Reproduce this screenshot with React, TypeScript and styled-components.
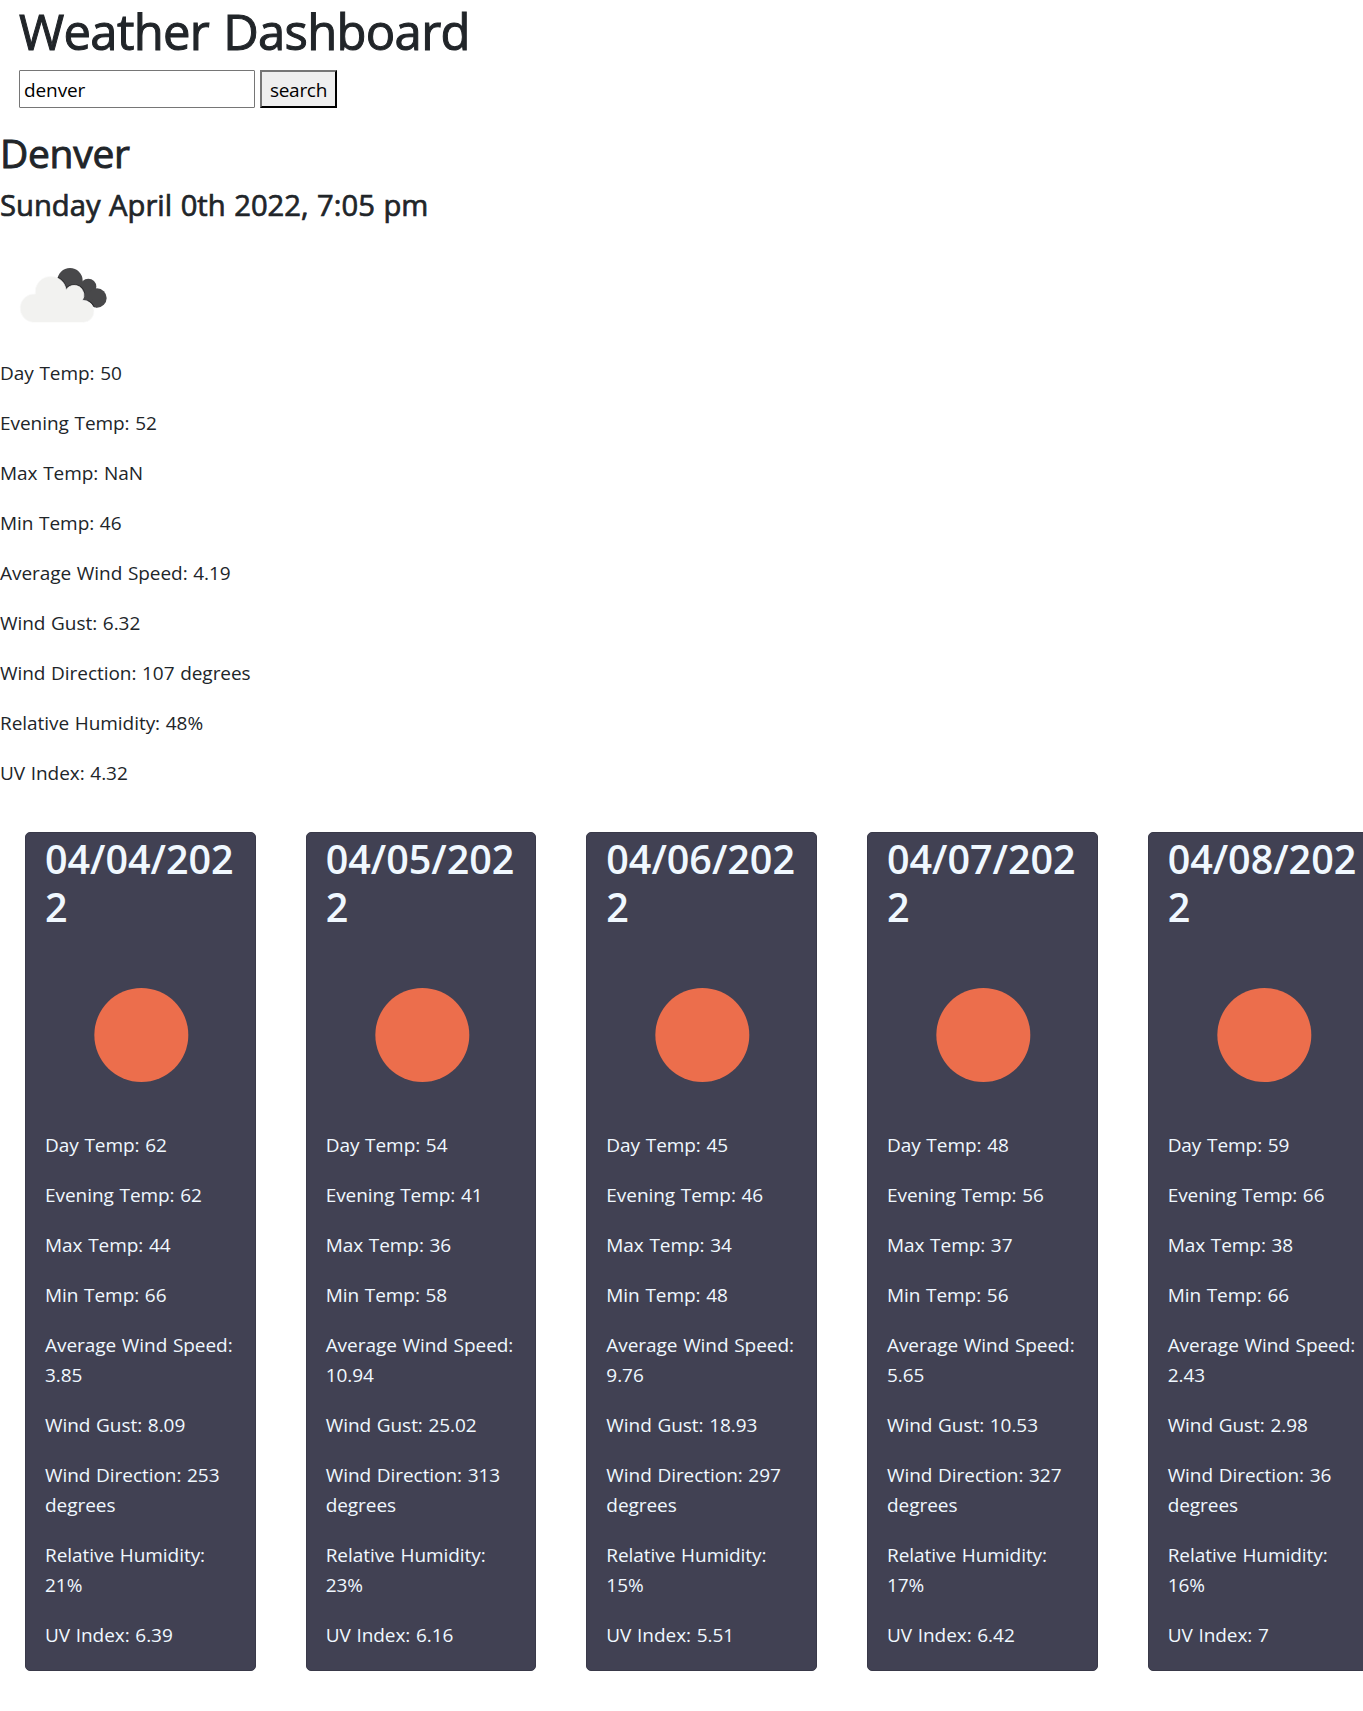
import React, { useState } from "react";
import styled, { createGlobalStyle } from "styled-components";

const GlobalStyle = createGlobalStyle`
  *, *::before, *::after { box-sizing: border-box; }
  html { font-size: 20px; }
  body {
    margin: 0;
    overflow-x: hidden;
    background: #fff;
    color: #212529;
    font-family: "Open Sans", "Noto Sans", sans-serif;
    font-size: 1rem;
    line-height: 1.5;
  }
`;

const Header = styled.header`
  padding: 0 20px;
`;

const Title = styled.h1`
  margin: 0 0 9px -1px;
  padding-top: 1px;
  font-size: 49px;
  font-weight: 400;
  line-height: 60px;
  letter-spacing: -0.7px;
  word-spacing: 2px;
  -webkit-text-stroke: 1px #212529;
`;

const SearchForm = styled.form`
  display: flex;
  gap: 5px;
  margin-left: -1px;
`;

const SearchInput = styled.input`
  width: 236px;
  height: 38px;
  padding: 3px 4px 1px;
  border: 1px solid #767676;
  border-radius: 1px;
  font: inherit;
  font-size: 19px;
  letter-spacing: -0.1px;
  color: #000;
  background: #fff;
  outline: none;
`;

const SearchButton = styled.button`
  width: 77px;
  height: 38px;
  padding: 2px 0 0;
  border: 2px outset #000;
  border-color: #767676 #212529 #212529 #767676;
  background: #efefef;
  color: #000;
  font: inherit;
  font-size: 19px;
  letter-spacing: -0.3px;
`;

const Current = styled.section`
  display: flex;
  flex-direction: column;
  padding-top: 20px;
`;

const City = styled.h2`
  margin: 0 0 9px;
  padding-top: 1px;
  font-size: 39px;
  font-weight: 400;
  line-height: 48px;
  letter-spacing: -0.3px;
  -webkit-text-stroke: 0.9px #212529;
`;

const Timestamp = styled.h4`
  margin: 0 0 9px;
  padding-top: 1px;
  font-size: 29.2px;
  font-weight: 400;
  line-height: 36px;
  letter-spacing: 0;
  word-spacing: 1px;
  -webkit-text-stroke: 0.7px #212529;
`;

const CloudIcon = styled.svg`
  display: block;
  width: 126px;
  height: 126px;
`;

const Reading = styled.p<{ $light?: boolean }>`
  margin: 0 0 20px;
  font-size: 19px;
  line-height: 30px;
  letter-spacing: -0.05px;
  word-spacing: 0.8px;
  color: ${(p) => (p.$light ? "aliceblue" : "#212529")};
`;

const Forecast = styled.section`
  display: flex;
  width: 1403.3px;
`;

const DayCard = styled.article`
  flex: 1 1 0;
  min-width: 0;
  margin: 24px 25px 25px;
  padding: 0 19px;
  border: 1px solid #393949;
  border-radius: 5px;
  background: #414153;
`;

const DayDate = styled.h2`
  margin: 0 0 8px;
  padding-top: 2px;
  font-size: 39.5px;
  font-weight: 600;
  line-height: 48px;
  letter-spacing: -0.03px;
  color: aliceblue;
  overflow-wrap: anywhere;
`;

const SunIcon = styled.svg`
  display: block;
  width: 100%;
  height: 191px;
`;

type Weather = {
  day: string;
  evening: string;
  max: string;
  min: string;
  wind: string;
  gust: string;
  direction: string;
  humidity: string;
  uv: string;
};

const make = (...v: string[]): Weather => ({
  day: v[0], evening: v[1], max: v[2], min: v[3], wind: v[4],
  gust: v[5], direction: v[6], humidity: v[7], uv: v[8],
});

const today = make("50", "52", "NaN", "46", "4.19", "6.32", "107", "48", "4.32");

const forecast: { date: string; weather: Weather }[] = [
  { date: "04/04/2022", weather: make("62", "62", "44", "66", "3.85", "8.09", "253", "21", "6.39") },
  { date: "04/05/2022", weather: make("54", "41", "36", "58", "10.94", "25.02", "313", "23", "6.16") },
  { date: "04/06/2022", weather: make("45", "46", "34", "48", "9.76", "18.93", "297", "15", "5.51") },
  { date: "04/07/2022", weather: make("48", "56", "37", "56", "5.65", "10.53", "327", "17", "6.42") },
  { date: "04/08/2022", weather: make("59", "66", "38", "66", "2.43", "2.98", "36", "16", "7") },
];

function Readings({ weather: w, light }: { weather: Weather; light?: boolean }) {
  const lines = [
    `Day Temp: ${w.day}`,
    `Evening Temp: ${w.evening}`,
    `Max Temp: ${w.max}`,
    `Min Temp: ${w.min}`,
    `Average Wind Speed: ${w.wind}`,
    `Wind Gust: ${w.gust}`,
    `Wind Direction: ${w.direction} degrees`,
    `Relative Humidity: ${w.humidity}%`,
    `UV Index: ${w.uv}`,
  ];
  return (
    <>
      {lines.map((line) => (
        <Reading key={line} $light={light}>{line}</Reading>
      ))}
    </>
  );
}

function BrokenClouds() {
  return (
    <CloudIcon viewBox="0 -54 378 378" aria-label="broken clouds">
      <g fill="#48484a">
        <circle cx="210" cy="92" r="38" />
        <circle cx="265" cy="110" r="24" />
        <circle cx="291" cy="144" r="29" />
        <path d="M190 100L245 90L291 173L240 150Z" />
      </g>
      <path
        d="M98 217A41 42 0 0 1 106 132A46 46 0 0 1 198 119A29 29 0 0 1 247 151A33 33 0 0 1 251 217Z"
        fill="none"
        stroke="#2e2e30"
        strokeWidth="8"
        clipPath="url(#rearCloud)"
      />
      <clipPath id="rearCloud">
        <circle cx="210" cy="92" r="38" />
        <circle cx="265" cy="110" r="24" />
        <circle cx="291" cy="144" r="29" />
      </clipPath>
      <path
        d="M98 217A41 42 0 0 1 106 132A46 46 0 0 1 198 119A29 29 0 0 1 247 151A33 33 0 0 1 251 217Z"
        fill="#f2f2f0"
        stroke="#fafafa"
        strokeWidth="2"
      />
    </CloudIcon>
  );
}

export default function App() {
  const [query, setQuery] = useState("denver");
  return (
    <>
      <GlobalStyle />
      <Header>
        <Title>Weather Dashboard</Title>
        <SearchForm onSubmit={(e) => e.preventDefault()}>
          <SearchInput value={query} onChange={(e) => setQuery(e.target.value)} />
          <SearchButton type="submit">search</SearchButton>
        </SearchForm>
      </Header>
      <Current>
        <City>Denver</City>
        <Timestamp>Sunday April 0th 2022, 7:05 pm</Timestamp>
        <BrokenClouds />
        <Readings weather={today} />
      </Current>
      <Forecast>
        {forecast.map(({ date, weather }) => (
          <DayCard key={date}>
            <DayDate>{date}</DayDate>
            <SunIcon viewBox="0 0 190.6 191" aria-label="clear sky">
              <circle cx="96.3" cy="96" r="47" fill="#ec6e4c" />
            </SunIcon>
            <Readings weather={weather} light />
          </DayCard>
        ))}
      </Forecast>
    </>
  );
}
